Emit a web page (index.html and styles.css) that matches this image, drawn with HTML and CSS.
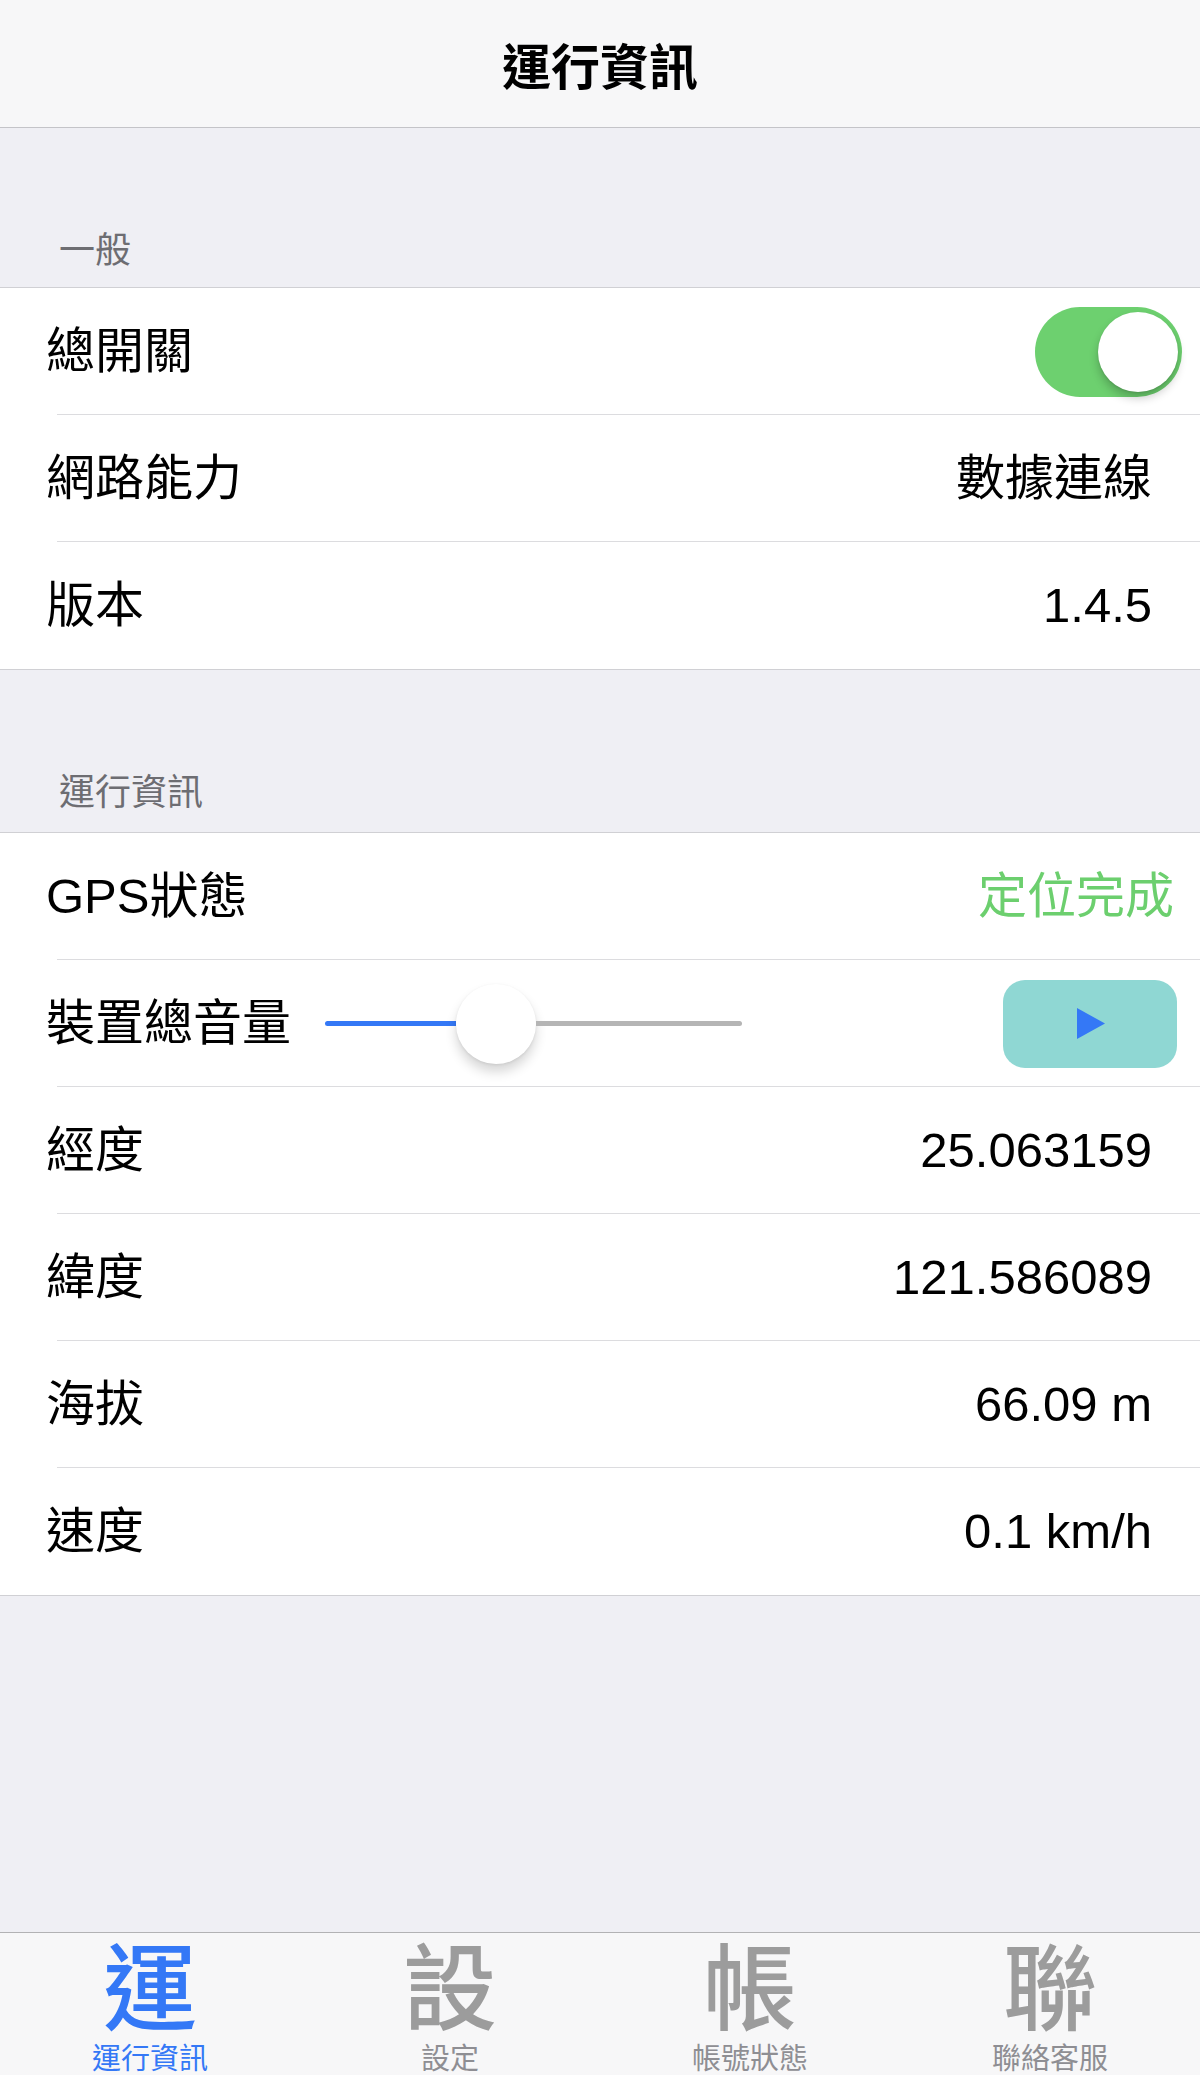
FILE: index.html
```html
<!DOCTYPE html>
<html lang="zh-Hant">
<head>
<meta charset="utf-8">
<title>運行資訊</title>
<link rel="stylesheet" href="styles.css">
</head>
<body>
<div class="app">
  <header class="navbar">
    <h1 class="nav-title">運行資訊</h1>
  </header>

  <main class="content">
    <div class="section-header first">一般</div>
    <section class="group">
      <div class="row">
        <span class="label">總開關</span>
        <span class="switch on"><span class="knob"></span></span>
      </div>
      <div class="row">
        <span class="label">網路能力</span>
        <span class="value">數據連線</span>
      </div>
      <div class="row last">
        <span class="label">版本</span>
        <span class="value">1.4.5</span>
      </div>
    </section>

    <div class="section-header second">運行資訊</div>
    <section class="group">
      <div class="row">
        <span class="label">GPS狀態</span>
        <span class="value status">定位完成</span>
      </div>
      <div class="row volume-row">
        <span class="label">裝置總音量</span>
        <div class="slider">
          <span class="track-fill"></span>
          <span class="thumb"></span>
          <span class="track-rest"></span>
        </div>
        <button class="play-btn" type="button" aria-label="播放">
          <svg width="28" height="31" viewBox="0 0 28 31"><polygon points="0,0 28,15.5 0,31" fill="#3478f6"/></svg>
        </button>
      </div>
      <div class="row">
        <span class="label">經度</span>
        <span class="value">25.063159</span>
      </div>
      <div class="row">
        <span class="label">緯度</span>
        <span class="value">121.586089</span>
      </div>
      <div class="row">
        <span class="label">海拔</span>
        <span class="value">66.09 m</span>
      </div>
      <div class="row last">
        <span class="label">速度</span>
        <span class="value">0.1 km/h</span>
      </div>
    </section>
  </main>

  <nav class="tabbar">
    <a class="tab active"><span class="tab-icon">運</span><span class="tab-label">運行資訊</span></a>
    <a class="tab"><span class="tab-icon">設</span><span class="tab-label">設定</span></a>
    <a class="tab"><span class="tab-icon">帳</span><span class="tab-label">帳號狀態</span></a>
    <a class="tab"><span class="tab-icon">聯</span><span class="tab-label">聯絡客服</span></a>
  </nav>
</div>
</body>
</html>
```

FILE: styles.css
```css
* { box-sizing: border-box; }

html, body {
  margin: 0;
  padding: 0;
}

body {
  background: #efeff4;
  font-family: "Liberation Sans", "Noto Sans CJK TC", sans-serif;
  color: #000;
}

.app {
  width: 1200px;
  min-height: 2075px;
  display: flex;
  flex-direction: column;
}

/* Navigation bar */
.navbar {
  height: 128px;
  background: #f7f7f8;
  border-bottom: 1px solid #c4c4c8;
  display: flex;
  align-items: center;
  justify-content: center;
}

.nav-title {
  margin: 0;
  font-family: "Noto Sans CJK TC", sans-serif;
  font-size: 49px;
  font-weight: 700;
  line-height: 1;
  color: #000;
}

.content {
  flex: 1;
}

/* Section headers */
.section-header {
  display: flex;
  align-items: flex-end;
  padding: 0 0 22px 59px;
  font-family: "Noto Sans CJK TC", sans-serif;
  font-size: 36px;
  line-height: 1;
  color: #6d6d72;
}
.section-header.first { height: 159px; }
.section-header.second { height: 162px; padding-bottom: 25px; }

/* Grouped list */
.group {
  background: #fff;
  border-top: 1px solid #d0d0d4;
  border-bottom: 1px solid #d0d0d4;
}

.row {
  height: 127px;
  display: flex;
  align-items: center;
  padding: 0 48px 0 46px;
  font-size: 49px;
  line-height: 1.2;
  background: linear-gradient(#dcdcdf, #dcdcdf) no-repeat 57px 100% / calc(100% - 57px) 1px;
  background-color: #fff;
}
.row.last {
  background-image: none;
}

.label {
  flex: 0 0 auto;
  color: #000;
}

.value {
  margin-left: auto;
  color: #000;
}

.value.status {
  color: #6ccf6e;
  margin-right: -22px;
}

/* Switch */
.switch {
  margin-left: auto;
  margin-right: -30px;
  width: 147px;
  height: 90px;
  border-radius: 45px;
  background: #6dd06f;
  display: flex;
  align-items: center;
  justify-content: flex-end;
  padding: 0 4px;
}
.knob {
  width: 80px;
  height: 80px;
  border-radius: 50%;
  background: #fff;
  box-shadow: 0 6px 10px rgba(0, 0, 0, 0.22), 0 1px 2px rgba(0, 0, 0, 0.1);
}

/* Volume slider */
.volume-row {
  padding-right: 23px;
}
.slider {
  margin-left: 34px;
  width: 417px;
  height: 80px;
  display: flex;
  align-items: center;
}
.track-fill {
  width: 131px;
  height: 5px;
  border-radius: 3px 0 0 3px;
  background: #3478f6;
}
.thumb {
  width: 80px;
  height: 80px;
  border-radius: 50%;
  background: #fff;
  box-shadow: 0 8px 12px rgba(0, 0, 0, 0.16), 0 1px 3px rgba(0, 0, 0, 0.08);
}
.track-rest {
  flex: 1;
  height: 5px;
  border-radius: 0 3px 3px 0;
  background: #b5b5b5;
}

.play-btn {
  margin-left: auto;
  width: 174px;
  height: 88px;
  border: 0;
  border-radius: 22px;
  background: #8fd7d3;
  display: flex;
  align-items: center;
  justify-content: center;
  padding: 0;
}
.play-btn svg {
  display: block;
  margin-left: 2px;
}

/* Tab bar */
.tabbar {
  height: 143px;
  background: #f7f7f8;
  border-top: 1px solid #b2b2b4;
  display: grid;
  grid-template-columns: repeat(4, 1fr);
}

.tab {
  display: flex;
  flex-direction: column;
  align-items: center;
  padding-top: 11px;
  color: #999;
  text-decoration: none;
  font-family: "Liberation Sans", "Noto Sans CJK TC", sans-serif;
}

.tab-icon {
  font-size: 94px;
  line-height: 1;
  font-weight: 500;
  color: #9c9c9c;
}

.tab-label {
  margin-top: 7px;
  font-size: 29px;
  line-height: 1;
  color: #8e8e93;
}

.tab.active .tab-icon,
.tab.active .tab-label {
  color: #3478f6;
}
```
